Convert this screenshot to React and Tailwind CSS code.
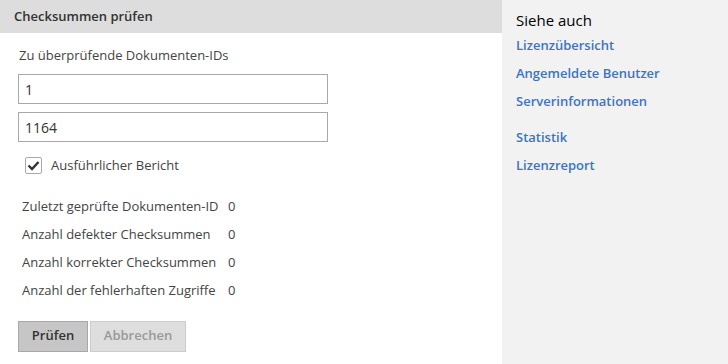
import React, { useState } from "react";

const stats = [
  { label: "Zuletzt geprüfte Dokumenten-ID", value: "0" },
  { label: "Anzahl defekter Checksummen", value: "0" },
  { label: "Anzahl korrekter Checksummen", value: "0" },
  { label: "Anzahl der fehlerhaften Zugriffe", value: "0" },
];

function App() {
  const [from, setFrom] = useState("1");
  const [to, setTo] = useState("1164");
  const [verbose, setVerbose] = useState(true);

  return (
    <div className="flex h-[364px] w-[728px] overflow-hidden bg-white text-[#333] font-['Open_Sans',sans-serif]">
      {/* main panel */}
      <div className="w-[502px] shrink-0">
        <div className="h-[33px] bg-[#dddddd] pl-[14px] flex items-center text-[13px] font-semibold text-[#333]">
          Checksummen prüfen
        </div>

        <div className="pl-[18px] pt-[12px]">
          <p className="pl-[1px] text-[13px] leading-[20px] text-[#444]">Zu überprüfende Dokumenten-IDs</p>

          <input
            value={from}
            onChange={(e) => setFrom(e.target.value)}
            className="mt-[9px] block w-[310px] h-[30px] border border-[#a9a9a9] px-[6px] text-[14px] text-[#333] outline-none"
          />
          <input
            value={to}
            onChange={(e) => setTo(e.target.value)}
            className="mt-[8px] block w-[310px] h-[30px] border border-[#a9a9a9] px-[6px] text-[14px] text-[#333] outline-none"
          />

          <label className="mt-[14px] ml-[7px] flex items-center gap-[9px] cursor-pointer">
            <button
              onClick={() => setVerbose(!verbose)}
              className="w-[17px] h-[17px] border border-[#a9a9a9] rounded-[2px] bg-white flex items-center justify-center"
            >
              {verbose && (
                <svg width="13" height="11" viewBox="0 0 13 11">
                  <path d="M1.5 5.5 L5 9 L11.5 2" fill="none" stroke="#333" strokeWidth="2.4" />
                </svg>
              )}
            </button>
            <span className="text-[13px] text-[#444]">Ausführlicher Bericht</span>
          </label>

          <div className="mt-[21px] pl-[4px] flex flex-col gap-[8px]">
            {stats.map((s) => (
              <div key={s.label} className="flex h-[20px] items-center text-[13px] text-[#444]">
                <span className="w-[206px]">{s.label}</span>
                <span>{s.value}</span>
              </div>
            ))}
          </div>

          <div className="mt-[20px] flex gap-[2px]">
            <button className="h-[31px] w-[70px] bg-[#c6c6c6] border border-[#a8a8a8] text-[13px] font-semibold text-[#333]">
              Prüfen
            </button>
            <button disabled className="h-[31px] w-[96px] bg-[#dedede] border border-[#cccccc] text-[13px] font-semibold text-[#999]">
              Abbrechen
            </button>
          </div>
        </div>
      </div>

      {/* see also */}
      <div className="flex-1 bg-[#f2f2f2] pl-[14px] pt-[10px]">
        <h2 className="text-[15px] leading-[20px] text-black">Siehe auch</h2>
        <div className="mt-[5px] flex flex-col gap-[8px] text-[13px] font-semibold text-[#3b74c7]">
          <a href="#" className="leading-[20px]">Lizenzübersicht</a>
          <a href="#" className="leading-[20px]">Angemeldete Benutzer</a>
          <a href="#" className="leading-[20px]">Serverinformationen</a>
          <a href="#" className="mt-[8px] leading-[20px]">Statistik</a>
          <a href="#" className="leading-[20px]">Lizenzreport</a>
        </div>
      </div>
    </div>
  );
}

export default App;
